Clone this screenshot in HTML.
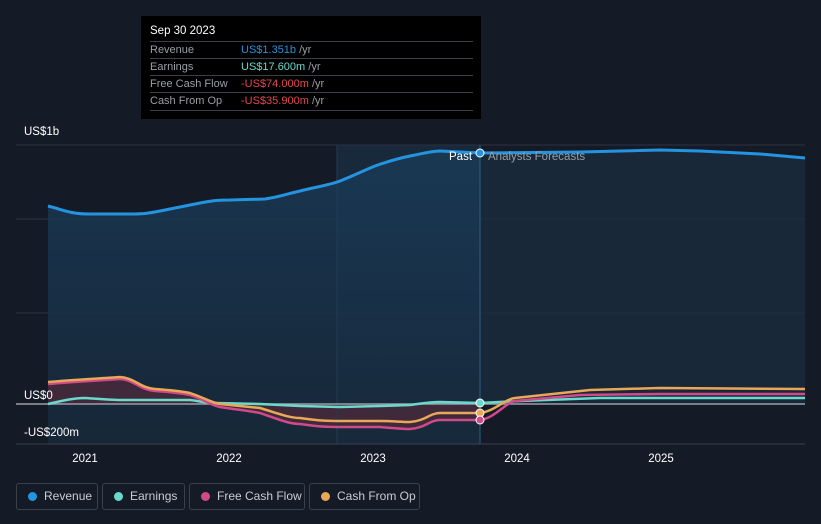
<!DOCTYPE html><html><head><style>
body{margin:0;background:#151b26;font-family:"Liberation Sans",sans-serif;}
.tt{position:absolute;left:141px;top:16px;width:340px;height:103px;background:#000;color:#fff;font-size:11px}
.tt .h{position:absolute;left:9px;top:9px;font-size:11.5px}
.tt .r{position:absolute;left:9px;width:323px;border-top:1px solid #3a3f48;height:17px;line-height:17px;color:#9a9ea6}
.tt .r span{position:absolute;left:91px}
.lg{position:absolute;top:483px;height:27px;border:1px solid #3a404c;border-radius:3px;color:#c8ccd2;font-size:12px;line-height:25px;box-sizing:border-box}
.lg i{position:absolute;left:11px;top:8px;width:9px;height:9px;border-radius:50%}
.lg b{font-weight:normal;position:absolute;left:27px}
</style></head><body>
<svg width="821" height="524" style="position:absolute;left:0;top:0">
<defs><linearGradient id="g" x1="0" y1="0" x2="0" y2="1"><stop offset="0" stop-color="#1a3a57"/><stop offset="1" stop-color="#17293b"/></linearGradient></defs>
<rect x="337" y="145" width="143" height="299" fill="#17293b"/>
<g stroke="#2a3140" stroke-width="1"><line x1="16" y1="145" x2="805" y2="145"/><line x1="16" y1="219" x2="805" y2="219"/><line x1="16" y1="313" x2="805" y2="313"/></g>
<path d="M48,206 C64,210 70,214 90,214 L130,214 C145,214 150,213 160,211 C180,207 190,205 200,203 C215,200 222,200 230,200 L265,199 C280,197 290,193 300,191 C320,186 330,185 340,181 C355,175 365,170 375,166 C392,160 400,158 410,156 C425,153 432,151 440,151 L480,153 L480,444 L48,444 Z" fill="url(#g)" opacity="0.85"/>
<path d="M480,153 L580,152 L660,150 L700,151 L760,154 L805,158 L805,404 L480,404 Z" fill="#1a2d42" opacity="0.7"/>
<path d="M48,384 C70,382 90,381 120,379 C135,380 140,390 155,391 C170,392 180,393 190,395 C205,400 210,405 220,407 C240,410 250,411 260,413 C280,420 290,424 300,424 C320,427 330,427 340,427 L380,427 C395,428 400,429 410,429 C425,428 430,420 440,420 L480,420 L480,404 L48,404Z" fill="#5a2a3a" opacity="0.6"/>
<line x1="480" y1="145" x2="480" y2="444" stroke="#2a5f86"/>
<line x1="337" y1="145" x2="337" y2="444" stroke="#1f3c55"/>
<line x1="16" y1="404" x2="805" y2="404" stroke="#9a9ea6" stroke-width="1.5"/>
<line x1="16" y1="444" x2="805" y2="444" stroke="#3a404c"/>
<path d="M48,206 C64,210 70,214 90,214 L130,214 C145,214 150,213 160,211 C180,207 190,205 200,203 C215,200 222,200 230,200 L265,199 C280,197 290,193 300,191 C320,186 330,185 340,181 C355,175 365,170 375,166 C392,160 400,158 410,156 C425,153 432,151 440,151 L480,153 L580,152 L660,150 L700,151 L760,154 L805,158" fill="none" stroke="#2394df" stroke-width="3"/>
<path d="M48,404 C65,400 75,398 85,398 C100,399 110,400 120,400 L190,400 C200,401 205,403 215,403 L260,404 L300,406 L340,407 L380,406 L410,405 C425,403 430,402 440,402 L480,403 L520,401 L600,398 L805,398" fill="none" stroke="#6bd8cc" stroke-width="2.5"/>
<path d="M48,384 C70,382 90,381 120,379 C135,380 140,390 155,391 C170,392 180,393 190,395 C205,400 210,405 220,407 C240,410 250,411 260,413 C280,420 290,424 300,424 C320,427 330,427 340,427 L380,427 C395,428 400,429 410,429 C425,428 430,420 440,420 L480,420 C495,418 505,403 515,401 L580,395 L660,394 L805,394" fill="none" stroke="#d04a8a" stroke-width="2.5"/>
<path d="M48,382 C70,380 90,379 120,377 C135,378 140,388 155,389 C170,390 180,391 190,393 C205,398 210,402 220,404 C240,406 250,407 260,408 C280,414 290,418 300,418 C320,421 330,421 340,421 L380,421 C395,421 400,422 410,422 C425,421 430,413 440,413 L480,413 C495,411 505,399 515,398 L590,390 L660,388 L805,389" fill="none" stroke="#e8a857" stroke-width="2.5"/>
<g stroke="#fff" stroke-width="1"><circle cx="480" cy="153" r="4" fill="#2394df"/><circle cx="480" cy="403" r="4" fill="#6bd8cc"/><circle cx="480" cy="413" r="4" fill="#e8a857"/><circle cx="480" cy="420" r="4" fill="#d04a8a"/></g>
<g font-size="11.5" fill="#fff"><text x="24" y="135">US$1b</text><text x="24" y="399">US$0</text><text x="24" y="436">-US$200m</text>
<text x="449" y="160">Past</text><text x="488" y="160" fill="#9a9ea6">Analysts Forecasts</text>
<g text-anchor="middle"><text x="85" y="462">2021</text><text x="229" y="462">2022</text><text x="373" y="462">2023</text><text x="517" y="462">2024</text><text x="661" y="462">2025</text></g></g>
</svg>
<div class="tt"><div class="h">Sep 30 2023</div>
<div class="r" style="top:25px">Revenue<span style="color:#2394df">US$1.351b <em style="font-style:normal;color:#9a9ea6">/yr</em></span></div>
<div class="r" style="top:42px">Earnings<span style="color:#6bd8cc">US$17.600m <em style="font-style:normal;color:#9a9ea6">/yr</em></span></div>
<div class="r" style="top:59px">Free Cash Flow<span style="color:#e5484d">-US$74.000m <em style="font-style:normal;color:#9a9ea6">/yr</em></span></div>
<div class="r" style="top:76px;border-bottom:1px solid #3a3f48">Cash From Op<span style="color:#e5484d">-US$35.900m <em style="font-style:normal;color:#9a9ea6">/yr</em></span></div></div>
<div class="lg" style="left:16px;width:82px"><i style="background:#2394df"></i><b>Revenue</b></div>
<div class="lg" style="left:102px;width:83px"><i style="background:#6bd8cc"></i><b>Earnings</b></div>
<div class="lg" style="left:189px;width:116px"><i style="background:#d04a8a"></i><b>Free Cash Flow</b></div>
<div class="lg" style="left:309px;width:111px"><i style="background:#e8a857"></i><b>Cash From Op</b></div>
</body></html>
